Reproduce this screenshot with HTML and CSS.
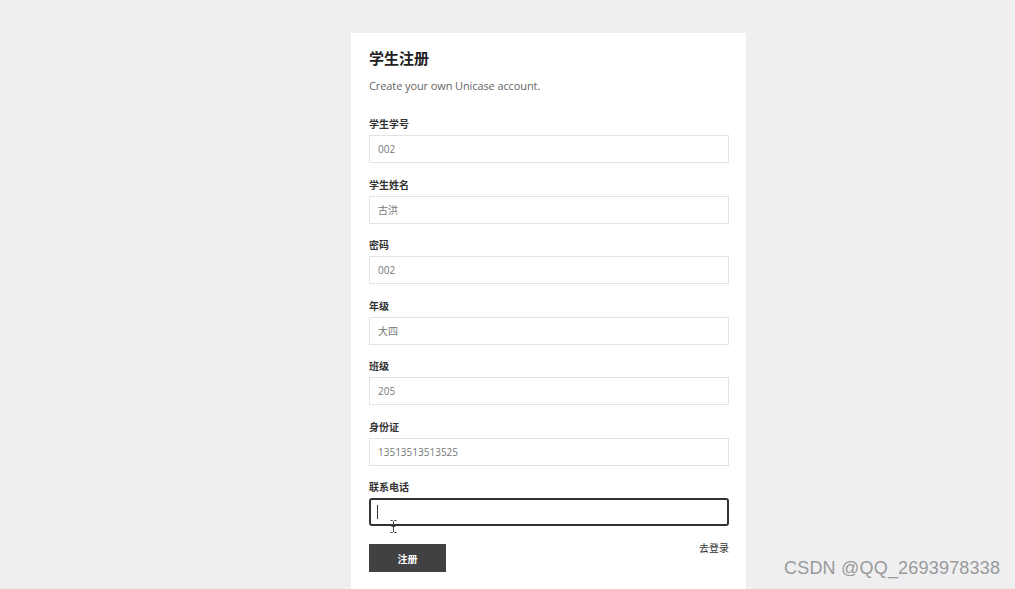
FILE: index.html
```html
<!DOCTYPE html>
<html lang="zh">
<head>
<meta charset="utf-8">
<title>学生注册</title>
<link rel="stylesheet" href="styles.css">
</head>
<body>
<div class="page">
  <div class="card">
    <h2 class="title">学生注册</h2>
    <p class="subtitle">Create your own Unicase account.</p>
    <form class="form">
      <div class="field">
        <label class="label">学生学号</label>
        <div class="input">002</div>
      </div>
      <div class="field">
        <label class="label">学生姓名</label>
        <div class="input">古洪</div>
      </div>
      <div class="field">
        <label class="label">密码</label>
        <div class="input">002</div>
      </div>
      <div class="field">
        <label class="label">年级</label>
        <div class="input">大四</div>
      </div>
      <div class="field">
        <label class="label">班级</label>
        <div class="input">205</div>
      </div>
      <div class="field">
        <label class="label">身份证</label>
        <div class="input">13513513513525</div>
      </div>
      <div class="field">
        <label class="label">联系电话</label>
        <div class="input focused">
          <span class="caret"></span>
          <svg class="ibeam" width="7" height="13" viewBox="0 0 7 13">
            <path d="M0.5 0.5 H2.5 L3.5 1.5 L4.5 0.5 H6.5 M3.5 1.5 V11.5 M0.5 12.5 H2.5 L3.5 11.5 L4.5 12.5 H6.5 M1.5 6.5 H5.5" fill="none" stroke="#444" stroke-width="1"/>
          </svg>
        </div>
      </div>
      <div class="actions">
        <button type="button" class="btn">注册</button>
        <a class="login-link">去登录</a>
      </div>
    </form>
  </div>
</div>
<div class="watermark">CSDN @QQ_2693978338</div>
</body>
</html>
```

FILE: styles.css
```css
html, body {
  margin: 0;
  padding: 0;
  height: 100%;
  overflow: hidden;
}
body {
  background: #efeff1;
  font-family: "Open Sans", "Noto Sans CJK SC", sans-serif;
  color: #333;
}
.page {
  padding: 33px 0 0 351px;
}
.card {
  width: 395px;
  box-sizing: border-box;
  background: #fff;
  padding: 15px 17px 40px 18px;
}
.title {
  margin: 0;
  font-size: 15px;
  line-height: 20px;
  font-weight: 700;
  color: #222;
  font-family: "Noto Sans CJK SC", sans-serif;
}
.subtitle {
  margin: 9px 0 0;
  font-size: 11px;
  line-height: 18px;
  color: #666;
  letter-spacing: -0.1px;
}
.form {
  margin-top: 22px;
}
.field {
  display: flex;
  flex-direction: column;
  margin-bottom: 14.5px;
}
.label {
  font-family: "Noto Sans CJK SC", sans-serif;
  font-size: 10px;
  line-height: 14px;
  font-weight: 700;
  color: #333;
  margin-bottom: 4px;
}
.input {
  position: relative;
  height: 28px;
  box-sizing: border-box;
  border: 1px solid #e3e3e3;
  padding: 0 8px;
  font-size: 10px;
  line-height: 26px;
  color: #777;
  font-family: "Open Sans", "Noto Sans CJK SC", sans-serif;
}
.input.focused {
  border: 2px solid #333;
  border-radius: 3px;
  padding: 0 7px;
}
.caret {
  position: absolute;
  left: 6px;
  top: 5px;
  width: 1px;
  height: 14px;
  background: #333;
}
.ibeam {
  position: absolute;
  left: 19px;
  top: 20px;
  display: block;
}
.actions {
  display: flex;
  justify-content: space-between;
  align-items: flex-start;
  margin-top: 18px;
}
.btn {
  width: 77px;
  height: 28px;
  border: none;
  background: #414042;
  color: #fff;
  font-family: "Noto Sans CJK SC", sans-serif;
  font-size: 10px;
  font-weight: 700;
  padding: 0;
  margin: 0;
}
.login-link {
  font-family: "Noto Sans CJK SC", sans-serif;
  font-size: 10px;
  line-height: 14px;
  color: #333;
  margin-top: -3px;
}
.watermark {
  position: absolute;
  left: 784px;
  top: 557px;
  font-family: "Liberation Sans", Arial, sans-serif;
  font-size: 18px;
  line-height: 22px;
  color: #9a9a9a;
  letter-spacing: 0.2px;
}
```
